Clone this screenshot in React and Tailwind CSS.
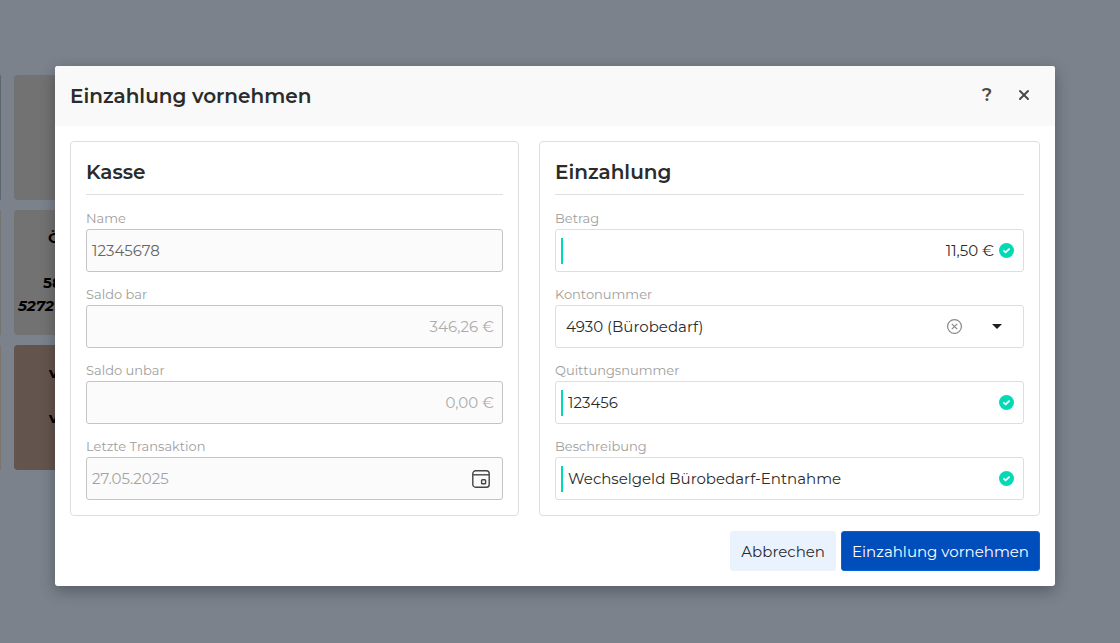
import React, { useState } from 'react';
import { X } from 'lucide-react';

const ACCOUNTS = ['4930 (Bürobedarf)'];

const TILES = [
  { color: 'bg-[#5c666e]', lines: [] },
  { color: 'bg-[#727272]', lines: [] },
  { color: 'bg-[#757471]', lines: [] },
  { color: 'bg-[#727272]', lines: [['Ö', 'pl-[34px] mt-4'], ['58', 'pl-[29px] mt-[22px]'], ['5272', 'pl-1 italic']] },
  { color: 'bg-[#7a756f]', lines: [] },
  { color: 'bg-[#64544e]', lines: [['v', 'pl-[35px] mt-4'], ['v', 'pl-[35px] mt-[22px]']] },
];

const FIELD = 'flex h-[43px] items-center rounded-[3px] border';

function CheckBadge() {
  return (
    <svg width="15" height="15" viewBox="0 0 15 15" className="shrink-0" aria-hidden="true">
      <circle cx="7.5" cy="7.5" r="7.5" fill="#00dbb5" />
      <path d="M4.4 7.4 6.6 9.4 10.6 5.6" fill="none" stroke="#fff" strokeWidth="1.7" />
    </svg>
  );
}

function CalendarIcon() {
  return (
    <svg width="18" height="18" viewBox="0 0 18 18" fill="none" stroke="#444" strokeWidth="1.4" aria-hidden="true">
      <rect x="0.8" y="0.8" width="16.4" height="16.4" rx="2.8" />
      <path d="M1 4.8h16" />
      <rect x="9.6" y="9.8" width="4" height="4" rx="0.8" />
    </svg>
  );
}

function Panel({ title, children }) {
  return (
    <section className="rounded border border-[#dedede] p-[15px]">
      <h2 className="border-b border-[#dedede] pb-[7px] text-[20px] leading-[30px] font-semibold">{title}</h2>
      <div className="mt-4 flex flex-col gap-[15px]">{children}</div>
    </section>
  );
}

function Field({ id, label, children }) {
  return (
    <div>
      <label htmlFor={id} className="block pb-[3px] text-[13px] leading-[15px] text-[#9e9e9e]">{label}</label>
      {children}
    </div>
  );
}

function ReadOnlyField({ id, label, value, className, icon }) {
  return (
    <Field id={id} label={label}>
      <div className={`${FIELD} border-[#c4c4c4] bg-[#fbfbfb] pl-[5px]`}>
        <input id={id} readOnly value={value} className={`min-w-0 flex-1 pt-0.5 outline-none ${className}`} />
        {icon && <button type="button" aria-label="Kalender öffnen" className="mr-3">{icon}</button>}
      </div>
    </Field>
  );
}

function ValidField({ id, label, value, onChange, align = 'text-left' }) {
  return (
    <Field id={id} label={label}>
      <div className={`${FIELD} gap-[5px] border-[#dedede] pl-[5px] pr-[9px]`}>
        <span className="h-[26px] w-0.5 shrink-0 bg-[#00dbb5]" />
        <input id={id} value={value} onChange={e => onChange(e.target.value)} className={`min-w-0 flex-1 pt-0.5 text-[#2b2b2b] outline-none ${align}`} />
        <CheckBadge />
      </div>
    </Field>
  );
}

export default function App() {
  const [amount, setAmount] = useState('11,50 €');
  const [account, setAccount] = useState(ACCOUNTS[0]);
  const [receipt, setReceipt] = useState('123456');
  const [description, setDescription] = useState('Wechselgeld Bürobedarf-Entnahme');

  return (
    <div className="relative min-h-screen overflow-hidden bg-[#7b828c] font-[Montserrat,Inter,sans-serif] text-[15px] text-[#2b2b2b]">
      {/* Kacheln hinter dem Dialog */}
      <div className="absolute inset-x-0 top-[75px] grid grid-cols-[1px_125px] gap-x-[13px] gap-y-[10px]" aria-hidden="true">
        {TILES.map((t, i) => (
          <div key={i} className={`h-[125px] overflow-hidden rounded ${t.color}`}>
            {t.lines.map(([text, place], n) => (
              <p key={n} className={`text-[15px] leading-[23px] font-bold text-black ${place}`}>{text}</p>
            ))}
          </div>
        ))}
      </div>

      <div className="relative pt-[66px] pr-[65px] pb-[57px] pl-[55px]">
        <div role="dialog" aria-labelledby="dialog-title" className="overflow-hidden rounded-[3px] bg-white shadow-[0_5px_15px_rgba(0,0,0,0.3)]">
          <header className="flex h-[60px] items-center bg-[#f9f9f9] px-[15px]">
            <h1 id="dialog-title" className="flex-1 text-[20px] leading-[30px] font-semibold">Einzahlung vornehmen</h1>
            <button type="button" aria-label="Hilfe" className="h-8 w-8 pb-0.5 text-[18px] font-semibold text-[#4a4a4a]">?</button>
            <button type="button" aria-label="Schließen" className="ml-[5px] flex h-8 w-8 items-center justify-center pb-[3px] text-[#4a4a4a]">
              <X size={16} strokeWidth={3} />
            </button>
          </header>

          <form className="p-[15px]" onSubmit={e => e.preventDefault()}>
            <div className="grid grid-cols-[449fr_501fr] gap-5">
              <Panel title="Kasse">
                <ReadOnlyField id="name" label="Name" value="12345678" className="text-[#666]" />
                <ReadOnlyField id="saldo-bar" label="Saldo bar" value="346,26 €" className="pr-2 text-right text-[#ababab]" />
                <ReadOnlyField id="saldo-unbar" label="Saldo unbar" value="0,00 €" className="pr-2 text-right text-[#ababab]" />
                <ReadOnlyField id="letzte" label="Letzte Transaktion" value="27.05.2025" className="text-[#a3a3a3]" icon={<CalendarIcon />} />
              </Panel>

              <Panel title="Einzahlung">
                <ValidField id="betrag" label="Betrag" value={amount} onChange={setAmount} align="text-right" />
                <Field id="konto" label="Kontonummer">
                  <div className={`${FIELD} border-[#dedede] pl-[10px] pr-[21px]`}>
                    <select id="konto" value={account} onChange={e => setAccount(e.target.value)} className="min-w-0 flex-1 appearance-none pt-0.5 text-[#2b2b2b] outline-none">
                      <option value="" />
                      {ACCOUNTS.map(a => <option key={a} value={a}>{a}</option>)}
                    </select>
                    <button type="button" aria-label="Auswahl löschen" onClick={() => setAccount('')} className="mr-[30px]">
                      <svg width="15" height="15" viewBox="0 0 15 15" fill="none" stroke="#888" strokeWidth="1.2" aria-hidden="true">
                        <circle cx="7.5" cy="7.5" r="6.9" />
                        <path d="m4.8 4.8 5.4 5.4M10.2 4.8l-5.4 5.4" />
                      </svg>
                    </button>
                    <svg width="10" height="5" viewBox="0 0 10 5" fill="#1f1f1f" aria-hidden="true"><path d="M0 0h10L5 5z" /></svg>
                  </div>
                </Field>
                <ValidField id="quittung" label="Quittungsnummer" value={receipt} onChange={setReceipt} />
                <ValidField id="beschreibung" label="Beschreibung" value={description} onChange={setDescription} />
              </Panel>
            </div>

            <footer className="mt-[15px] flex justify-end gap-[5px]">
              <button type="button" className="h-10 rounded-[3px] bg-[#eaf3fd] px-[11px] pt-0.5">Abbrechen</button>
              <button type="submit" className="h-10 rounded-[3px] border border-[#0066d6] bg-[#004dbc] px-[10px] pt-0.5 text-white">Einzahlung vornehmen</button>
            </footer>
          </form>
        </div>
      </div>
    </div>
  );
}
